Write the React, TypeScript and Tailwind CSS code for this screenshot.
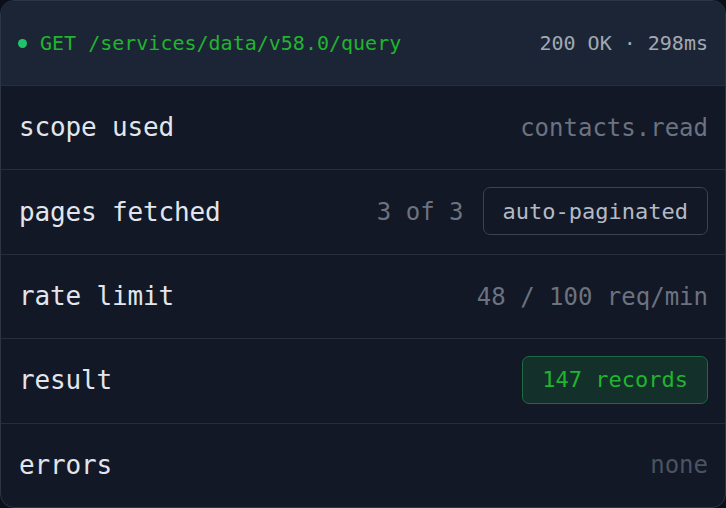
import React from 'react';

const mono = { fontFamily: '"DejaVu Sans Mono", "Liberation Mono", monospace' };

const Row: React.FC<{ label: string; children: React.ReactNode }> = ({ label, children }) => (
  <div className="flex-1 flex items-center justify-between pl-[18px] pr-[17px] border-t border-[#252e3d]">
    <span className="text-[26px] text-[#e2e6ec] tracking-[-0.15px]">{label}</span>
    <div className="flex items-center gap-[19px]">{children}</div>
  </div>
);

export default function App() {
  return (
    <div className="w-[726px] h-[508px] bg-[#0b0f17]" style={mono}>
      <div className="w-full h-full rounded-[14px] border border-[#2b3545] bg-[#121826] overflow-hidden flex flex-col">
        {/* request line */}
        <div className="h-[84px] shrink-0 bg-[#1c2535] flex items-center justify-between pl-[17px] pr-[17px]">
          <div className="flex items-center gap-[13px]">
            <span className="w-[9px] h-[9px] rounded-full bg-[#22c26a]" />
            <span className="text-[20px] text-[#1fb52e]">GET /services/data/v58.0/query</span>
          </div>
          <span className="text-[20px] text-[#a3a9b3]">200 OK · 298ms</span>
        </div>

        <Row label="scope used">
          <span className="text-[24px] text-[#6b7280]">contacts.read</span>
        </Row>
        <Row label="pages fetched">
          <span className="text-[24px] text-[#6b7280]">3 of 3</span>
          <span className="h-[48px] -mt-[2px] flex items-center px-[19px] rounded-[7px] border border-[#3a4352] text-[22px] text-[#b4bac4]">
            auto-paginated
          </span>
        </Row>
        <Row label="rate limit">
          <span className="text-[24px] text-[#6b7280]">48 / 100 req/min</span>
        </Row>
        <Row label="result">
          <span className="h-[48px] -mt-[2px] flex items-center px-[19px] rounded-[7px] border border-[#1d6b45] bg-[#13302b] text-[22px] text-[#1fb52e]">
            147 records
          </span>
        </Row>
        <Row label="errors">
          <span className="text-[24px] text-[#4b5361]">none</span>
        </Row>
      </div>
    </div>
  );
}
